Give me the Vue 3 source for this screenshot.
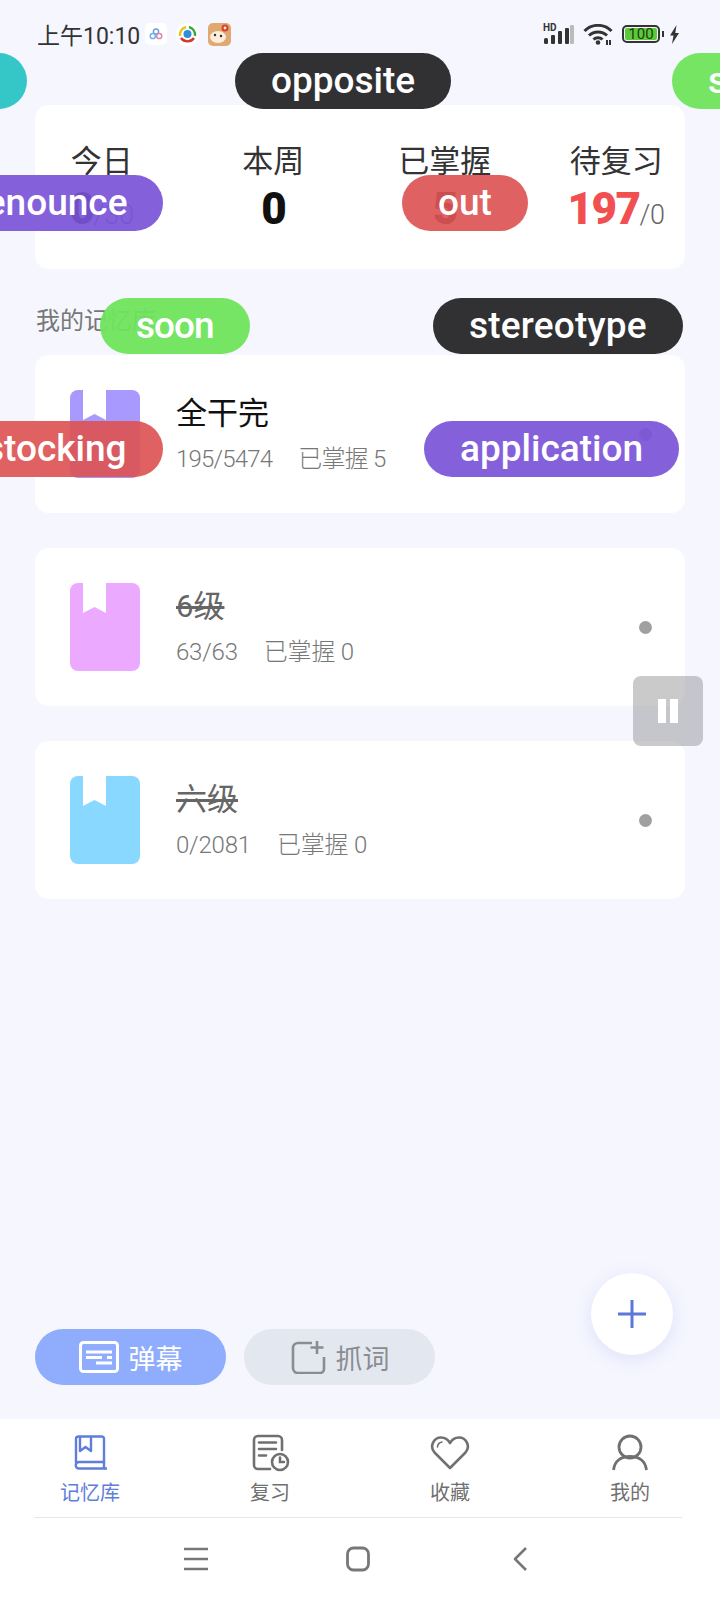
<script setup>
const stats = [
  { label: '今日', value: '0', rest: '/30' },
  { label: '本周', value: '0' },
  { label: '已掌握', value: '5' },
  { label: '待复习', value: '197', rest: '/0', hot: true }
]

const decks = [
  { name: '全干完', progress: '195/5474', known: '已掌握 5', color: '#a899ff', tight: true },
  { name: '6级', progress: '63/63', known: '已掌握 0', color: '#ebaaff', done: true },
  { name: '六级', progress: '0/2081', known: '已掌握 0', color: '#88d8ff', done: true }
]

const pills = [
  { text: '', left: -45, top: 53, color: 'rgba(42, 196, 196, 0.95)' },
  { text: 'opposite', left: 235, top: 53, color: 'rgba(38, 38, 41, 0.95)' },
  { text: 's', left: 672, top: 53, color: 'rgba(112, 228, 92, 0.95)' },
  { text: 'renounce', left: -63, top: 175, color: 'rgba(121, 84, 216, 0.92)' },
  { text: 'out', left: 402, top: 175, color: 'rgba(220, 84, 84, 0.92)' },
  { text: 'soon', left: 100, top: 298, color: 'rgba(112, 228, 92, 0.95)', spacing: -1 },
  { text: 'stereotype', left: 433, top: 298, color: 'rgba(38, 38, 41, 0.95)', spacing: 0.2 },
  { text: 'stocking', left: -51, top: 421, color: 'rgba(220, 84, 84, 0.92)' },
  { text: 'application', left: 424, top: 421, color: 'rgba(121, 84, 216, 0.92)' }
]

const tabs = ['记忆库', '复习', '收藏', '我的']
</script>

<template>
  <div class="page">
    <header class="status">
      <span class="time">上午10:10</span>
      <svg class="app" width="22" height="22" viewBox="0 0 22 22">
        <rect width="22" height="22" rx="5" fill="#fff" />
        <circle cx="11" cy="8.5" r="2.6" fill="none" stroke="#6f9fe0" stroke-width="1.5" />
        <circle cx="7.800" cy="13" r="2.600" fill="none" stroke="#6fb0e8" stroke-width="1.5" />
        <circle cx="14.200" cy="13" r="2.600" fill="none" stroke="#d88aa8" stroke-width="1.5" />
      </svg>
      <svg class="app app-news" width="23" height="23" viewBox="0 0 23 23">
        <circle cx="11.5" cy="11.5" r="11.5" fill="#fff" />
        <path d="M4 13a8 8 0 0 1 6-9" fill="none" stroke="#e8c21e" stroke-width="2.4" />
        <path d="M13 4a8 8 0 0 1 6 9" fill="none" stroke="#3ca83c" stroke-width="2.4" />
        <path d="M18 15a8 8 0 0 1-13 0" fill="none" stroke="#d8342c" stroke-width="2.4" />
        <circle cx="11.5" cy="11" r="4" fill="#2f8ed8" />
      </svg>
      <svg class="app app-bear" width="23" height="23" viewBox="0 0 23 23">
        <rect width="23" height="23" rx="5" fill="#e0a873" />
        <circle cx="17" cy="5" r="3.5" fill="#d8402c" />
        <circle cx="17" cy="5" r="1.400" fill="#fbeedd" />
        <ellipse cx="10" cy="14" rx="8" ry="6" fill="#fbeedd" />
        <circle cx="7" cy="12" r="1.2" fill="#3a2a20" />
        <circle cx="13" cy="13" r="1.2" fill="#3a2a20" />
      </svg>

      <div class="sys">
        <div class="signal">
          <span class="hd">HD</span>
          <svg width="31" height="19" viewBox="0 0 31 19">
            <rect x="1" y="13" width="4" height="6" rx="1.5" fill="#333" />
            <rect x="8" y="10" width="4" height="9" rx="1" fill="#333" />
            <rect x="15" y="6" width="4" height="13" rx="1" fill="#333" />
            <rect x="22" y="3" width="4" height="16" rx="1" fill="#333" />
            <rect x="27" y="0" width="4" height="19" rx="1" fill="#bbb" />
          </svg>
        </div>
        <svg class="wifi" width="30" height="21" viewBox="0 0 30 21">
          <path d="M1.5 7a19 19 0 0 1 27 0" fill="none" stroke="#333" stroke-width="3" />
          <path d="M6 11.500a13 13 0 0 1 18 0" fill="none" stroke="#333" stroke-width="3" />
          <path d="M10.500 15.500a6.500 6.500 0 0 1 9 0" fill="none" stroke="#333" stroke-width="3" />
          <circle cx="15" cy="18.500" r="2.300" fill="#333" />
          <rect x="23" y="16" width="2" height="5" fill="#333" />
          <rect x="26" y="16" width="2" height="5" fill="#333" />
        </svg>
        <div class="battery">
          <div class="cell"><span>100</span></div>
          <i class="nub"></i>
        </div>
        <svg width="11" height="19" viewBox="0 0 11 19">
          <path d="M7.500 0 1 10.500h3.500L3 19l7-11H6.300z" fill="#333" />
        </svg>
      </div>
    </header>

    <section class="stats">
      <div class="stats-grid">
        <div v-for="s in stats" :key="s.label" class="stat">
          <div class="stat-label">{{ s.label }}</div>
          <div class="stat-value">
            <b :class="{ hot: s.hot }">{{ s.value }}</b><span v-if="s.rest">{{ s.rest }}</span>
          </div>
        </div>
      </div>
    </section>

    <h2 class="section-title">我的记忆库</h2>

    <div class="decks">
      <div v-for="d in decks" :key="d.name" class="deck">
        <svg class="cover" width="70" height="88" viewBox="0 0 70 88">
          <rect width="70" height="88" rx="8" :fill="d.color" />
          <path d="M13 0h23v30l-11.500-6L13 30z" fill="#fff" />
        </svg>
        <div class="deck-body">
          <div class="deck-name" :class="{ done: d.done }">{{ d.name }}</div>
          <div class="deck-sub" :class="{ tight: d.tight }">
            <span>{{ d.progress }}</span>
            <span>{{ d.known }}</span>
          </div>
        </div>
        <i class="dot"></i>
      </div>
    </div>

    <div class="actions">
      <button class="action action-on">
        <svg width="40" height="32" viewBox="0 0 40 32" fill="none" stroke="#fff" stroke-width="3">
          <rect x="1.500" y="1.500" width="37" height="29" rx="3" />
          <path d="M7 11h26M7 16.500h16M28 16.500h5M17 22h16" />
        </svg>
        弹幕
      </button>
      <button class="action">
        <svg width="36" height="34" viewBox="0 0 36 34" fill="none" stroke="#8a8c90" stroke-width="2.600">
          <path d="M22 3H8a5 5 0 0 0-5 5v20a5 5 0 0 0 5 5h22a4 4 0 0 0 4-4V17" />
          <path d="M27 1v13M20.500 7.500h13" />
        </svg>
        抓词
      </button>
    </div>

    <nav class="bar">
      <div class="tabs">
        <div v-for="(t, i) in tabs" :key="t" class="tab" :class="{ active: i === 0 }">
          <svg v-if="i === 0" width="40" height="40" viewBox="0 0 40 40" fill="none" stroke="#5f7ddb" stroke-width="2.400" stroke-linejoin="round">
            <path d="M6 30V6a2.500 2.500 0 0 1 2.500-2.500h23A2.500 2.500 0 0 1 34 6v24" />
            <path d="M9 29h25v6.500H9a3.250 3.250 0 0 1 0-6.500z" />
            <path d="M34 35.500h3M10 4v14l5.500-4 5.500 4V4" />
          </svg>
          <svg v-else-if="i === 1" width="40" height="40" viewBox="0 0 40 40" fill="none" stroke="#707070" stroke-width="2.600" stroke-linecap="round">
            <path d="M20 36H8a4 4 0 0 1-4-4V7a4 4 0 0 1 4-4h20a4 4 0 0 1 4 4v10" />
            <path d="M9 9.500h17M9 16h17M9 22.500h7" />
            <circle cx="30" cy="29" r="8" />
            <path d="M30 24.500V29h4" />
          </svg>
          <svg v-else-if="i === 2" width="40" height="40" viewBox="0 0 40 40" fill="none" stroke="#707070" stroke-width="2.600" stroke-linejoin="round" stroke-linecap="round">
            <path d="M20 35 4.500 19.500C-1 13 4 4.500 11 4.500c4 0 7 2 9 5.500 2-3.500 5-5.500 9-5.500 7 0 12 8.500 6.500 15z" />
            <path d="M7.500 14c.2-2.500 1.800-4.500 4.500-5" stroke-width="1.600" />
          </svg>
          <svg v-else width="40" height="40" viewBox="0 0 40 40" fill="none" stroke="#707070" stroke-width="2.800">
            <circle cx="20" cy="14" r="11" />
            <path d="M3.500 37C4.500 28 11 23.500 20 23.500S35.500 28 36.500 37" />
          </svg>
          <span>{{ t }}</span>
        </div>
      </div>
      <div class="keys">
        <svg width="26" height="24" viewBox="0 0 26 24" fill="none" stroke="#777" stroke-width="2.600">
          <path d="M1 2h24M1 12h24M1 22h24" />
        </svg>
        <svg width="26" height="26" viewBox="0 0 26 26" fill="none" stroke="#777" stroke-width="2.800">
          <rect x="2.500" y="2" width="21" height="22" rx="6" />
        </svg>
        <svg width="16" height="26" viewBox="0 0 16 26" fill="none" stroke="#777" stroke-width="2.600" stroke-linejoin="round">
          <path d="M14 2 3 13l11 11" />
        </svg>
      </div>
    </nav>

    <button class="fab">
      <svg width="30" height="30" viewBox="0 0 30 30" stroke="#5b78d8" stroke-width="3">
        <path d="M15 1v28M1 15h28" />
      </svg>
    </button>

    <div class="pause"><i></i><i></i></div>

    <div
      v-for="p in pills"
      :key="p.left + '-' + p.top"
      class="pill"
      :style="{ left: p.left + 'px', top: p.top + 'px', background: p.color, letterSpacing: (p.spacing || 0) + 'px' }"
    >{{ p.text }}</div>
  </div>
</template>

<style>
html, body {
  margin: 0;
  background: #f5f6fe;
}
</style>

<style scoped>
.page {
  position: relative;
  display: flex;
  flex-direction: column;
  width: 720px;
  height: 1600px;
  overflow: hidden;
  background: #f5f6fe;
  font-family: Roboto, "Noto Sans CJK SC", sans-serif;
  color: #333;
}

.status {
  display: flex;
  align-items: center;
  height: 68px;
  padding: 0 40px 0 37px;
  box-sizing: border-box;
}
.time {
  font-size: 23px;
  color: #333;
  margin-right: 5px;
}
.app-news { margin-left: 9px; }
.app-bear { margin-left: 9px; }
.sys {
  display: flex;
  align-items: center;
  margin-left: auto;
}
.signal {
  position: relative;
  width: 31px;
  height: 19px;
  margin-right: 9px;
}
.signal svg { display: block; }
.hd {
  position: absolute;
  left: 0;
  top: -2px;
  font-size: 10px;
  line-height: 10px;
  font-weight: 700;
  color: #333;
}
.wifi { margin-right: 9px; }
.battery {
  display: flex;
  align-items: center;
  margin-right: 5px;
}
.cell {
  width: 38px;
  height: 18px;
  box-sizing: border-box;
  border: 2px solid #333;
  border-radius: 5px;
  padding: 1px;
}
.cell span {
  display: block;
  height: 12px;
  line-height: 12px;
  border-radius: 2px;
  background: #5cc93a;
  font-size: 15px;
  text-align: center;
  color: #1c3d10;
}
.nub {
  width: 2px;
  height: 6px;
  margin-left: 2px;
  background: #333;
}

.stats {
  margin: 37px 35px 0;
  height: 164px;
  box-sizing: border-box;
  padding-top: 38px;
  background: #fff;
  border-radius: 14px;
}
.stats-grid {
  display: grid;
  grid-template-columns: repeat(4, 171.5px);
  margin: 0 -19px;
}
.stat {
  text-align: center;
}
.stat-label {
  font-size: 31px;
  line-height: 38px;
  color: #333;
}
.stat-value {
  height: 48px;
  margin-top: 4px;
  line-height: 48px;
  font-size: 27px;
  font-weight: 300;
  color: #666;
}
.stat-value b {
  font-size: 44px;
  font-weight: 900;
  letter-spacing: -1.500px;
  color: #111;
}
.stat-value b.hot {
  color: #f25050;
}

.section-title {
  margin: 38px 36px 20px;
  font-size: 24px;
  line-height: 28px;
  font-weight: 400;
  color: #777;
}

.decks {
  display: flex;
  flex-direction: column;
  gap: 35px;
  margin: 0 35px;
}
.deck {
  display: flex;
  align-items: center;
  height: 158px;
  padding: 0 33px 0 35px;
  background: #fff;
  border-radius: 14px;
}
.cover { flex: none; }
.deck-body {
  margin-left: 36px;
}
.deck-name {
  font-size: 31px;
  line-height: 40px;
  color: #111;
  margin-bottom: 10px;
}
.deck-name.done {
  color: #666;
  text-decoration: line-through;
}
.deck-sub {
  display: flex;
  gap: 26px;
  font-size: 24px;
  line-height: 30px;
  font-weight: 300;
  letter-spacing: -0.200px;
  color: #777;
}
.deck-sub.tight {
  letter-spacing: -0.800px;
}
.dot {
  width: 13px;
  height: 13px;
  margin-left: auto;
  border-radius: 50%;
  background: #a0a0a0;
}

.actions {
  display: flex;
  gap: 18px;
  margin: auto 35px 34px;
}
.action {
  display: flex;
  align-items: center;
  justify-content: center;
  gap: 10px;
  width: 191px;
  height: 56px;
  padding: 0;
  border: 0;
  border-radius: 28px;
  background: #e3e8f0;
  font-family: inherit;
  font-size: 27px;
  font-weight: 400;
  color: #8a8c90;
}
.action-on {
  background: #8fadfc;
  color: #fff;
}

.bar {
  background: #fff;
  height: 181px;
  box-sizing: border-box;
}
.tabs {
  display: grid;
  grid-template-columns: repeat(4, 180px);
  height: 99px;
  box-sizing: border-box;
  padding-top: 14px;
  position: relative;
}
.tabs::after {
  content: "";
  position: absolute;
  left: 34px;
  right: 38px;
  bottom: 0;
  height: 1px;
  background: #e6e6e8;
}
.tab {
  display: flex;
  flex-direction: column;
  align-items: center;
  font-size: 20px;
  color: #707070;
}
.tab span {
  margin-top: 7px;
  line-height: 26px;
}
.tab.active {
  color: #5f7ddb;
}
.keys {
  display: grid;
  grid-template-columns: repeat(3, 162px);
  justify-content: center;
  justify-items: center;
  align-items: center;
  height: 82px;
  padding-right: 5px;
}

.fab {
  position: absolute;
  left: 591px;
  top: 1273px;
  display: flex;
  align-items: center;
  justify-content: center;
  width: 82px;
  height: 82px;
  padding: 0;
  border: 0;
  border-radius: 50%;
  background: #fff;
  box-shadow: 0 4px 18px rgba(120, 140, 230, 0.18);
}

.pause {
  position: absolute;
  left: 633px;
  top: 676px;
  display: flex;
  align-items: center;
  justify-content: center;
  gap: 4px;
  width: 70px;
  height: 70px;
  border-radius: 8px;
  background: rgba(150, 150, 152, 0.5);
}
.pause i {
  width: 8px;
  height: 24px;
  background: #fff;
}

.pill {
  position: absolute;
  box-sizing: border-box;
  height: 56px;
  min-width: 72px;
  padding: 0 36px;
  border-radius: 28px;
  line-height: 56px;
  font-size: 37px;
  font-weight: 500;
  color: #fff;
  white-space: nowrap;
}
</style>
